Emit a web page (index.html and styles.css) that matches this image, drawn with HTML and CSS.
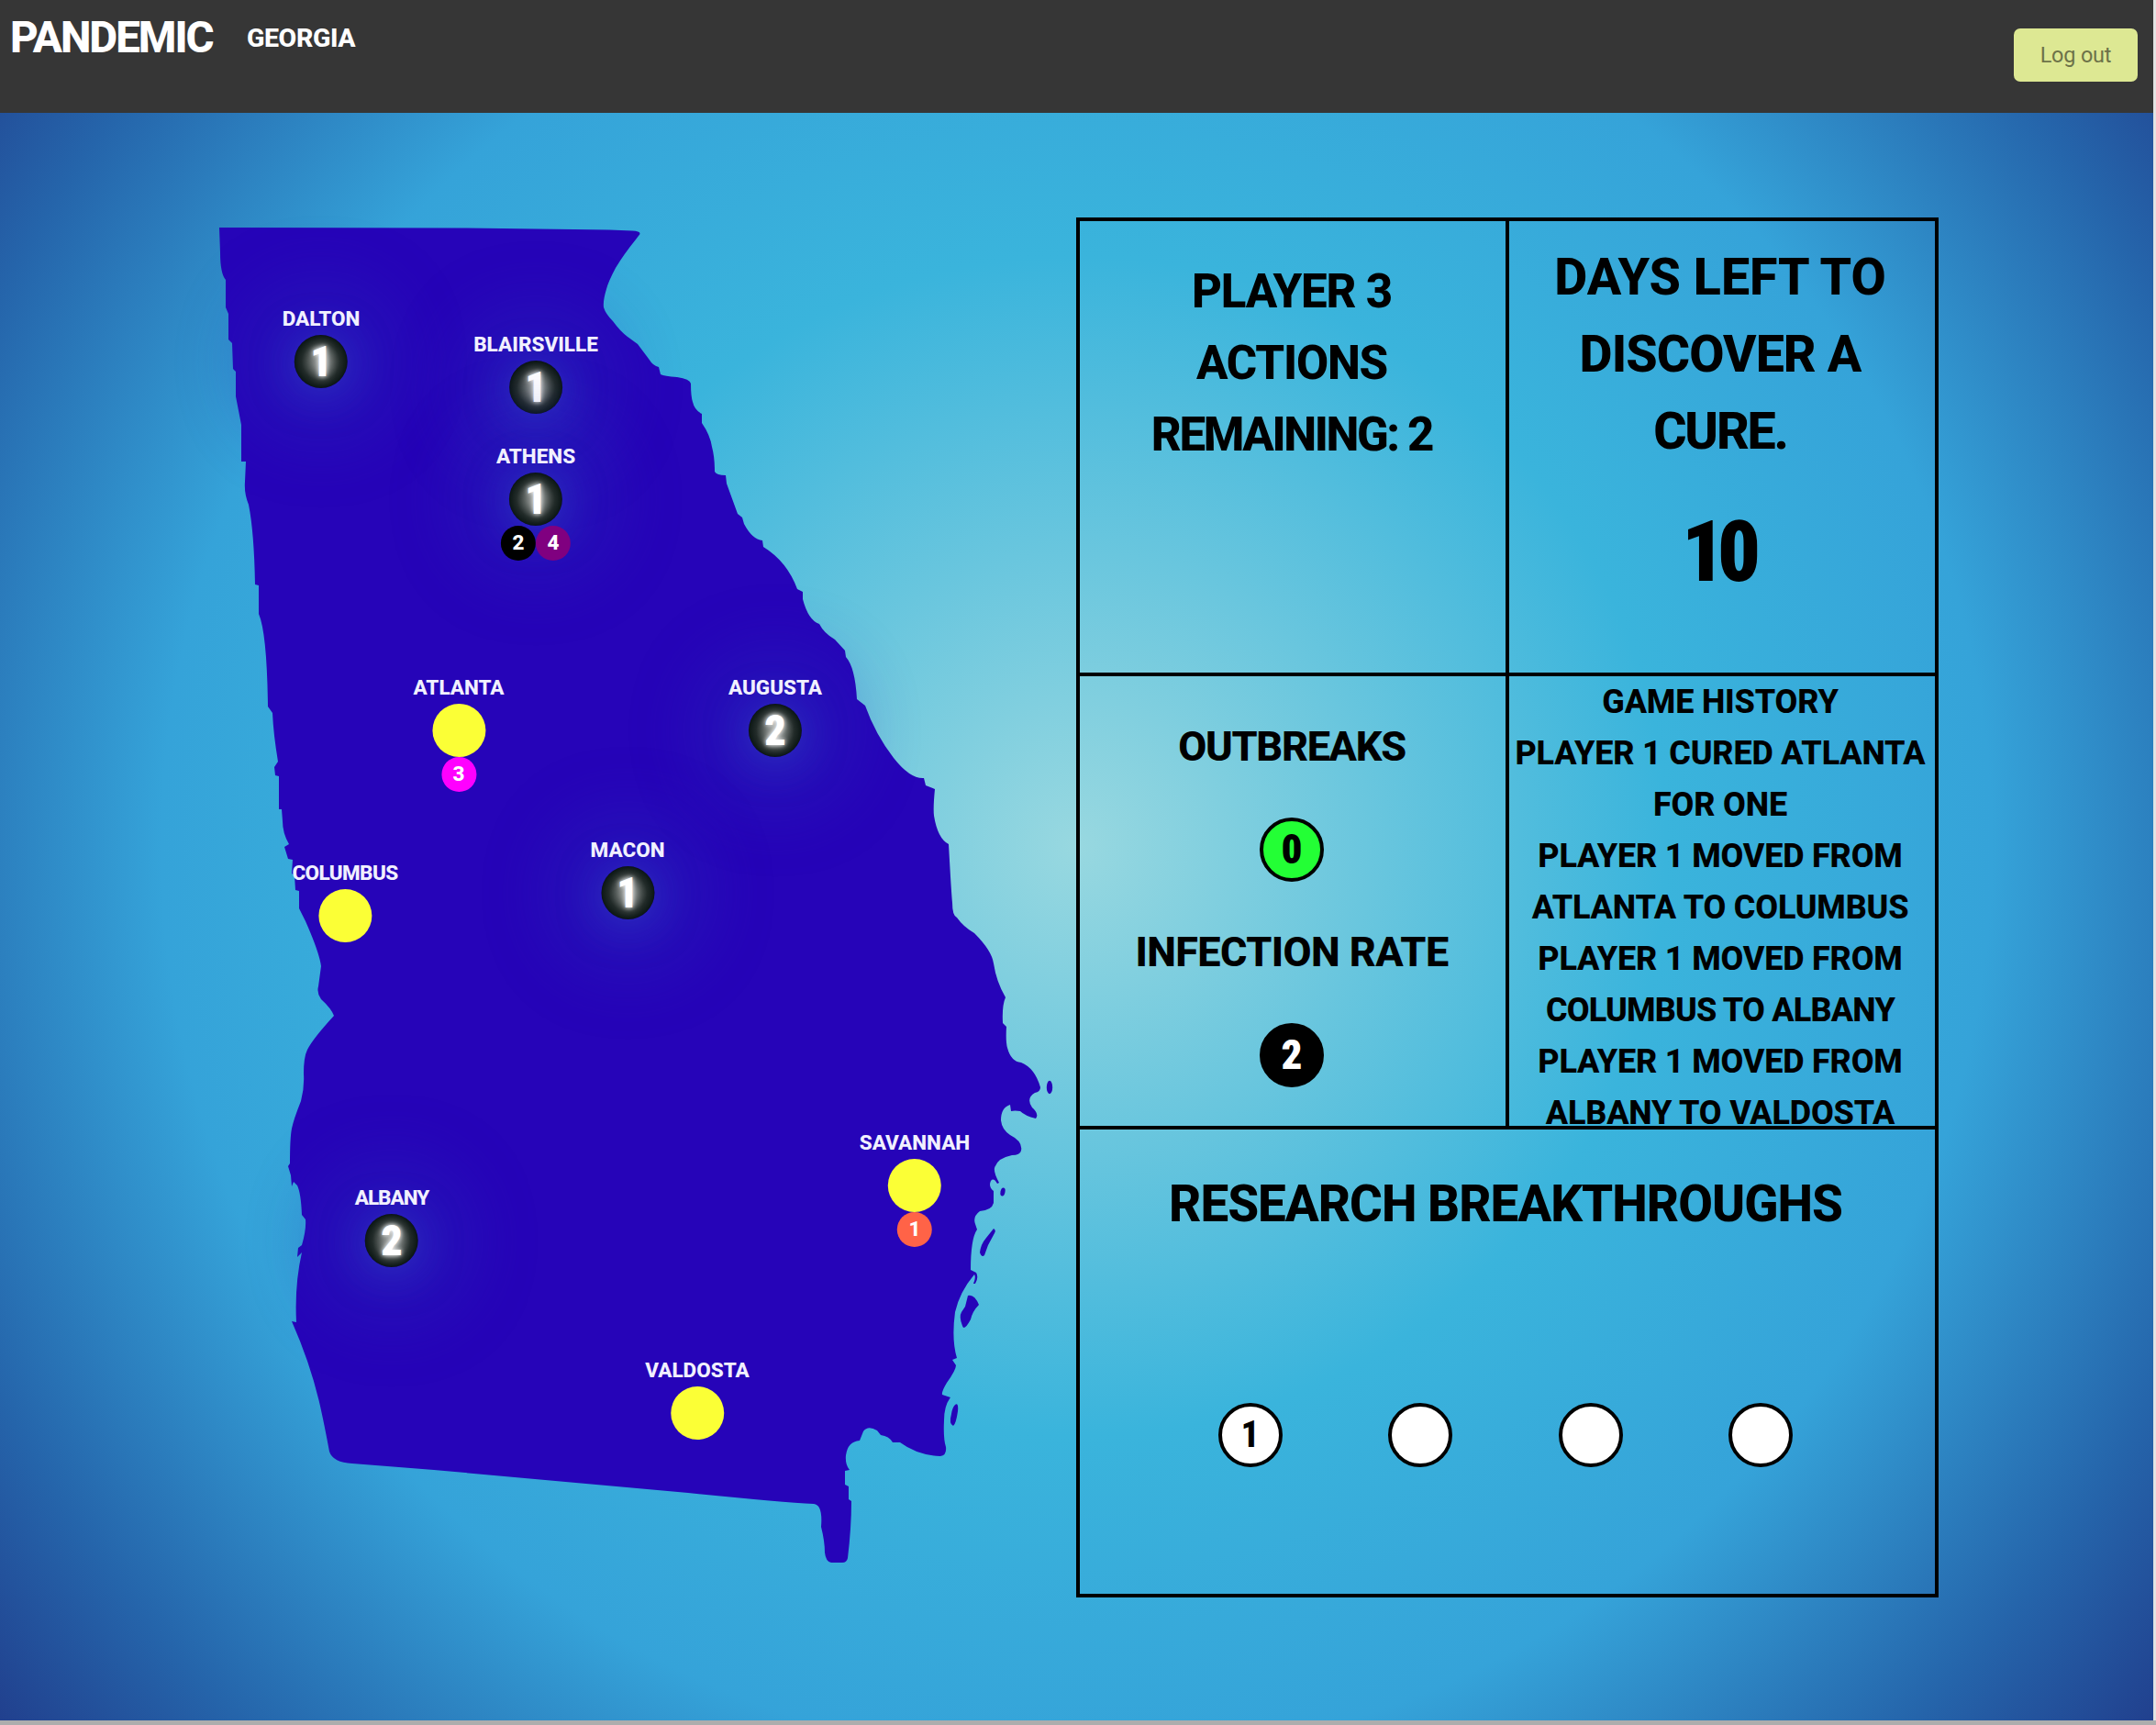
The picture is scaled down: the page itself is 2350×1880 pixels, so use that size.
FILE: index.html
```
<!DOCTYPE html>
<html lang="en">
<head>
<meta charset="utf-8">
<title>Pandemic Georgia</title>
<link rel="stylesheet" href="styles.css">
</head>
<body>
<div class="window">
  <header class="navbar">
    <div class="brand">PANDEMIC</div>
    <div class="region">GEORGIA</div>
    <button class="logout" type="button">Log out</button>
  </header>
  <main class="game">
    <section class="map">
      <svg class="state" viewBox="0 123 1173 1752" fill="#2604b8">
        <path d="M239 248L504 248.500L664 250.500L689 251.500Q701 252 696 257L693 261Q680 277 671 292Q663 307 661 315Q657 328 658 335Q660 342 668 350Q676 361 684 367L695 375L707 391Q712 399 718 400L720 408Q724 410 738 411Q752 413 753 418Q753 432 755 438Q757 447 765 451L765 461Q774 474 776 487Q779 498 779 514Q781 518 791 518L792 527L804 560L809 564L811 571Q820 588 831 589L832 596Q858 612 869 642L875 645L875 653Q881 676 893 680Q898 690 910 697L921 709L922 716Q932 727 934 762L943 769Q954 800 974 826Q992 849 1007 848L1009 856L1019 860Q1017 880 1018 889Q1022 914 1034 920Q1037 975 1038 984Q1038 998 1043 1000Q1050 1010 1062 1017Q1081 1036 1083 1050Q1086 1070 1096 1087Q1092 1096 1093 1115L1097 1119Q1096 1135 1098 1142Q1102 1157 1113 1158Q1128 1164 1134 1185Q1134 1190 1128 1191Q1118 1197 1125 1207Q1133 1214 1129 1219Q1117 1216 1112 1211Q1106 1210 1102 1211L1101 1204Q1091 1207 1091 1221Q1092 1231 1101 1237Q1115 1244 1113 1254Q1112 1259 1103 1259Q1087 1262 1084 1273Q1083 1278 1089 1289L1087 1290Q1083 1283 1080 1287Q1077 1293 1083 1298L1083 1311Q1081 1319 1068 1320Q1060 1326 1063 1334L1065 1340Q1058 1350 1058 1384L1064 1387Q1067 1392 1063 1399L1061 1399Q1064 1392 1062 1389Q1046 1408 1041 1430Q1037 1460 1043 1480L1038 1482L1042 1488Q1042 1493 1032 1507Q1026 1517 1027 1520L1036 1523Q1029 1532 1029 1548Q1028 1568 1031 1577Q1032 1586 1025 1587Q1000 1586 981 1572L973 1572Q969 1565 960 1564L956 1559Q946 1553 941 1560L937 1570Q924 1571 922 1586Q921 1596 926 1602L921 1603L921 1618L925 1620L925 1634L928 1636Q928 1665 924 1698Q923 1703 918 1703L906 1703Q900 1702 899 1692Q899 1680 895 1664Q897 1640 887 1639Q850 1637 750 1627L473 1602L384 1595Q363 1594 359 1582Q354 1555 350 1537Q340 1490 318 1440L323 1441Q321 1400 329 1365L324 1370L325 1360L329 1357Q334 1340 333 1329L329 1324Q328 1300 324 1292L320 1288L318 1293L317 1281L314 1271L316 1268Q316 1240 318 1230Q320 1220 328 1200Q332 1185 331 1170Q331 1152 335 1144Q341 1132 364 1107Q361 1099 350 1089Q345 1082 347 1075L350 1053Q348 1038 333 1004L326 990L326 971L322 970L321 954L318 952L319 937L314 936L310 923L315 920Q308 908 308 895L307 882L304 882L304 846L300 845L299 836L303 830Q298 800 297 777L292 770Q291 690 282 669L282 638L278 637Q277 580 271 550Q266 538 267 525L268 503L263 503L263 463L257 432L257 405L254 402L253 374L249 370L249 342L246 335L246 305Q240 298 240 275Z"/>
        <ellipse cx="1144" cy="1185" rx="3.200" ry="7.200"/>
        <ellipse cx="1093" cy="1299" rx="2.500" ry="4.500" transform="rotate(12 1093 1299)"/>
        <path d="M1083 1339Q1086 1341 1084 1344L1077 1357L1073 1368Q1070 1371 1068 1365Q1069 1356 1075 1349Z"/>
        <path d="M1055 1412Q1062 1410 1067 1422Q1060 1429 1058 1438Q1051 1451 1049 1445Q1045 1435 1048 1430L1052 1424Z"/>
        <path d="M1041 1531Q1045 1528 1044 1538Q1042 1552 1039 1554Q1034 1552 1037 1541Q1038 1534 1041 1531Z"/>
      </svg>
      <div class="city dalton"><span class="name">DALTON</span><span class="spot infected">1</span></div>
      <div class="city blairsville"><span class="name">BLAIRSVILLE</span><span class="spot infected">1</span></div>
      <div class="city athens"><span class="name">ATHENS</span><span class="spot infected">1</span><div class="pawns"><span class="pawn p2">2</span><span class="pawn p4">4</span></div></div>
      <div class="city augusta"><span class="name">AUGUSTA</span><span class="spot infected">2</span></div>
      <div class="city atlanta"><span class="name">ATLANTA</span><span class="spot"></span><div class="pawns"><span class="pawn p3">3</span></div></div>
      <div class="city macon"><span class="name">MACON</span><span class="spot infected">1</span></div>
      <div class="city columbus"><span class="name">COLUMBUS</span><span class="spot"></span></div>
      <div class="city savannah"><span class="name">SAVANNAH</span><span class="spot"></span><div class="pawns"><span class="pawn p1">1</span></div></div>
      <div class="city albany"><span class="name">ALBANY</span><span class="spot infected">2</span></div>
      <div class="city valdosta"><span class="name">VALDOSTA</span><span class="spot"></span></div>
    </section>
    <section class="board">
      <div class="cell turn">
        <p>PLAYER 3</p>
        <p>ACTIONS</p>
        <p class="remaining">REMAINING: 2</p>
      </div>
      <div class="cell days">
        <p>DAYS LEFT TO</p>
        <p class="discover">DISCOVER A</p>
        <p class="cure">CURE.</p>
        <p class="count">10</p>
      </div>
      <div class="cell rates">
        <p class="outbreaks">OUTBREAKS</p>
        <span class="disc green">0</span>
        <p>INFECTION RATE</p>
        <span class="disc black">2</span>
      </div>
      <div class="cell history">
        <p>GAME HISTORY</p>
        <p>PLAYER 1 CURED ATLANTA<br>FOR ONE</p>
        <p>PLAYER 1 MOVED FROM<br>ATLANTA TO COLUMBUS</p>
        <p>PLAYER 1 MOVED FROM<br><span class="tight">COLUMBUS TO ALBANY</span></p>
        <p>PLAYER 1 MOVED FROM<br>ALBANY TO VALDOSTA</p>
      </div>
      <div class="cell research">
        <h2>RESEARCH BREAKTHROUGHS</h2>
        <div class="cures">
          <span class="disc">1</span>
          <span class="disc"></span>
          <span class="disc"></span>
          <span class="disc"></span>
        </div>
      </div>
    </section>
  </main>
</div>
</body>
</html>
```
FILE: styles.css
```
* { box-sizing: border-box; }
html, body { margin: 0; height: 1880px; overflow: hidden; }
body {
  background: #adadad;
  font-family: Roboto, "Liberation Sans", sans-serif;
  font-weight: 800;
  color: #000;
}
p, h2 { margin: 0; font: inherit; white-space: nowrap; }

.window {
  width: 2350px;
  height: 1875px;
  border-right: 3px solid #e3e3e3;
  display: flex;
  flex-direction: column;
}

/* top bar */
.navbar {
  height: 123px;
  flex: none;
  background: #363636;
  color: #fff;
  display: flex;
  align-items: flex-start;
  padding: 0 17px 0 11px;
}
.brand { font-size: 47.5px; line-height: 82px; width: 258px; letter-spacing: -2px; }
.region { font-size: 28.5px; line-height: 83px; letter-spacing: -.4px; }
.logout {
  margin: 31px 0 0 auto;
  width: 135px;
  height: 58px;
  padding: 0;
  border: 0;
  border-radius: 7px;
  background: #dde893;
  color: #6d7249;
  font: 400 23.5px/56px Roboto, sans-serif;
  letter-spacing: -.2px;
}

/* playing area */
.game {
  flex: 1;
  min-height: 0;
  display: flex;
  align-items: flex-start;
  background: radial-gradient(circle at 50% 45.6%, #98d8e0 0%, #3ab4dc 42.500%, #35a3d9 66%, #2565ab 87%, #21408e 100%);
}
.map { position: relative; width: 1173px; height: 1752px; flex: none; }
.state { display: block; width: 1173px; height: 1752px; }

.city {
  position: absolute;
  transform: translateX(-50%);
  display: flex;
  flex-direction: column;
  align-items: center;
  color: #fff;
}
.dalton { left: 350px; top: 206px; }
.blairsville { left: 584px; top: 234px; }
.athens { left: 584px; top: 356px; }
.augusta { left: 845px; top: 608px; }
.atlanta { left: 500px; top: 608px; }
.macon { left: 684px; top: 785px; }
.columbus { left: 376px; top: 810px; }
.savannah { left: 997px; top: 1104px; }
.albany { left: 427px; top: 1164px; }
.valdosta { left: 760px; top: 1352px; }

.name { position: relative; z-index: 1; font-size: 22.5px; line-height: 36px; color: #f1f0ff; }
.columbus .name { letter-spacing: -.6px; }
.albany .name { letter-spacing: -1px; }
.spot {
  width: 58px;
  height: 58px;
  border-radius: 50%;
  background: #fbff36;
  font-size: 46px;
  line-height: 58px;
  text-align: center;
}
.infected {
  background: radial-gradient(closest-side, #8a8f8d 0%, #6a706e 30%, #222b29 72%, #0b1614 100%);
  box-shadow: 0 4px 44px 2px rgba(50,80,200,.55), 0 0 70px 60px rgba(40,50,185,.3);
  font-weight: 900;
  font-stretch: 75%;
  text-shadow: 0 0 5px #fff, 0 0 12px rgba(255,255,255,.6);
}
.pawns { display: flex; z-index: 1; }
.pawn {
  width: 38px;
  height: 38px;
  border-radius: 50%;
  font-size: 22.5px;
  line-height: 36px;
  text-align: center;
}
.p1 { background: #ff6347; }
.p2 { background: #000; }
.p3 { background: #f0f; }
.p4 { background: #800080; }

/* status board */
.board {
  width: 940px;
  height: 1504px;
  margin-top: 114px;
  border: 4px solid #000;
  display: grid;
  grid-template-columns: 468px 464px;
  grid-template-rows: 496px 494px 506px;
}
.cell {
  min-width: 0;
  min-height: 0;
  border-bottom: 4px solid #000;
  text-align: center;
  display: flex;
  flex-direction: column;
  align-items: center;
}
.turn, .rates { border-right: 4px solid #000; padding-right: 2px; }
.days, .history { padding-right: 4px; }
.turn { padding-top: 38px; font-size: 51px; line-height: 78px; letter-spacing: -1.2px; }
.remaining { letter-spacing: -2.4px; }
.days { padding-top: 20px; font-size: 55.5px; line-height: 84px; }
.discover { letter-spacing: -.9px; }
.cure { letter-spacing: -2.2px; }
.count { margin-top: 20px; font-size: 92px; line-height: 138px; font-weight: 900; font-stretch: 75%; letter-spacing: -8px; padding-right: 6px; }
.rates { padding-top: 42px; font-size: 45px; line-height: 70px; letter-spacing: -.6px; }
.outbreaks { letter-spacing: -1.3px; }
.disc {
  width: 70px;
  height: 70px;
  border: 4px solid #000;
  border-radius: 50%;
  background: #fff;
  font-stretch: 75%;
  letter-spacing: 0;
  line-height: 62px;
}
.rates .disc { margin: 42px 0; font-weight: 900; }
.rates .green { background: #23ff35; }
.rates .black { background: #000; color: #fff; }
.history { font-size: 36px; line-height: 56px; letter-spacing: -.2px; }
.tight { letter-spacing: -.8px; }
.research {
  grid-column: 1 / 3;
  border-bottom: 0;
  padding: 45px 4px 0 0;
}
.research h2 { font-size: 54.7px; line-height: 72px; letter-spacing: -1px; }
.cures { display: flex; gap: 115.500px; margin: 181px 0 0; font-size: 40px; }
```
